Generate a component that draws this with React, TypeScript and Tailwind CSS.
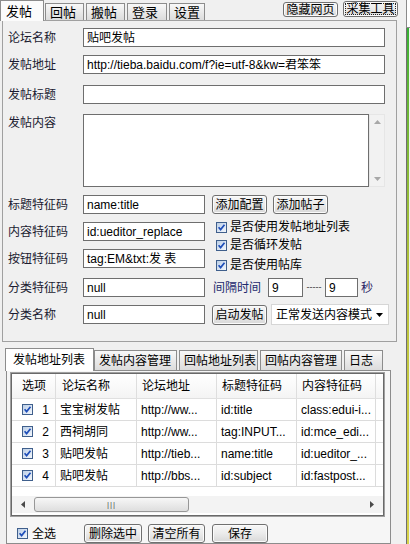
import React from 'react';
import clsx from 'clsx';

type P = { children?: React.ReactNode; className?: string };

const CheckBox: React.FC<{ className?: string }> = ({ className }) => (
    <svg width="11" height="11" viewBox="0 0 11 11" className={clsx('shrink-0', className)}>
        <defs>
            <linearGradient id="cbFill" x1="0" y1="0" x2="1" y2="1">
                <stop offset="0" stopColor="#b9cde6" />
                <stop offset="1" stopColor="#f6f9fd" />
            </linearGradient>
        </defs>
        <rect x="0.5" y="0.5" width="10" height="10" fill="url(#cbFill)" stroke="#3f5f8c" />
        <path d="M2.6 5.3 L4.6 7.6 L8.5 2.8" fill="none" stroke="#1d4db9" strokeWidth="1.7" />
    </svg>
);

const Button: React.FC<P> = ({ children, className }) => (
    <div
        className={clsx(
            'flex items-center justify-center whitespace-nowrap rounded-[3px] border border-[#707070] bg-linear-to-b from-[#f7f7f7] via-[#ebebeb] to-[#d8d8d8] text-[12px] leading-none text-black shadow-[inset_0_0_0_1px_#fbfbfb]',
            className,
        )}
    >
        {children}
    </div>
);

const Field: React.FC<P> = ({ children, className }) => (
    <div
        className={clsx(
            'flex items-center overflow-hidden whitespace-nowrap border border-[#6e6e6e] bg-white pl-[3px] text-[12px] leading-none text-black',
            className,
        )}
    >
        {children}
    </div>
);

const Label: React.FC<P> = ({ children, className }) => (
    <span className={clsx('w-[75px] shrink-0 text-[12px] leading-[16px] text-[#1b1b30]', className)}>{children}</span>
);

const topTabs = [
    { name: '回帖', w: 'w-[39px]' },
    { name: '搬帖', w: 'w-[39px]' },
    { name: '登录', w: 'w-[40px]' },
    { name: '设置', w: 'w-[36px]' },
];

const bottomTabs = [
    { name: '发帖内容管理', w: 'w-[83px]' },
    { name: '回帖地址列表', w: 'w-[79px]' },
    { name: '回帖内容管理', w: 'w-[82px]' },
    { name: '日志', w: 'w-[39px]' },
];

const columns = [
    { name: '选项', w: 'w-[44px]', pl: 'pl-[10px]' },
    { name: '论坛名称', w: 'w-[81px]', pl: 'pl-[6px]' },
    { name: '论坛地址', w: 'w-[80px]', pl: 'pl-[5px]' },
    { name: '标题特征码', w: 'w-[80px]', pl: 'pl-[5px]' },
    { name: '内容特征码', w: 'w-[79px]', pl: 'pl-[5px]' },
];

const rows = [
    ['宝宝树发帖', 'http://ww...', 'id:title', 'class:edui-i...'],
    ['西祠胡同', 'http://ww...', 'tag:INPUT...', 'id:mce_edi...'],
    ['贴吧发帖', 'http://tieb...', 'name:title', 'id:ueditor_...'],
    ['贴吧发帖', 'http://bbs...', 'id:subject', 'id:fastpost...'],
];

const App: React.FC = () => {
    return (
        <div className="flex h-[544px] w-[410px] overflow-hidden bg-[#f0f0f0] font-['Liberation_Sans','Noto_Sans_CJK_SC',sans-serif] text-black">
            <div className="flex w-[398px] shrink-0 flex-col">
                {/* top tabs */}
                <div className="flex h-[20px] shrink-0 items-end">
                    <div className="relative z-10 -mb-px flex h-[21px] w-[44px] items-center border border-b-0 border-[#8c8c8c] bg-[#fbfbfb] pl-[5px] text-[13px] leading-none">
                        发帖
                    </div>
                    <div className="ml-px flex items-end gap-[2px]">
                        {topTabs.map((t) => (
                            <div
                                key={t.name}
                                className={clsx(
                                    'flex h-[17px] items-center border border-b-0 border-[#8c8c8c] bg-linear-to-b from-[#f8f8f8] to-[#dcdcdc] pl-[4px] text-[13px] leading-none',
                                    t.w,
                                )}
                            >
                                {t.name}
                            </div>
                        ))}
                    </div>
                    <div className="mb-[3px] ml-[78px] flex gap-[5px] self-start pt-[2px]">
                        <Button className="h-[15px] w-[55px] rounded-[2px] border-[#5a5a5a]">隐藏网页</Button>
                        <Button className="-mt-px h-[16px] w-[55px] rounded-[2px] border-[#5a5a5a] p-px">
                            <span className="flex h-full w-full items-center justify-center border border-dotted border-[#222]">
                                采集工具
                            </span>
                        </Button>
                    </div>
                </div>

                {/* main form panel */}
                <div className="ml-[2px] h-[322px] w-[395px] shrink-0 border border-[#a0a0a0] bg-[#f0f0f0] pl-[5px] pt-[7px]">
                    <div className="flex h-[19px] items-center">
                        <Label className="text-[#1a1f4a]">论坛名称</Label>
                        <Field className="h-[19px] w-[302px]">贴吧发帖</Field>
                    </div>
                    <div className="mt-[8px] flex h-[19px] items-center">
                        <Label className="text-[#1a1f4a]">发帖地址</Label>
                        <Field className="h-[19px] w-[302px]">http://tieba.baidu.com/f?ie=utf-8&amp;kw=君笨笨</Field>
                    </div>
                    <div className="mt-[11px] flex h-[19px] items-center">
                        <Label>发帖标题</Label>
                        <Field className="h-[19px] w-[302px]" />
                    </div>
                    <div className="mt-[10px] flex items-start">
                        <Label className="pt-px">发帖内容</Label>
                        <Field className="h-[73px] w-[286px]" />
                        <div className="flex h-[73px] w-[16px] flex-col items-center justify-between border border-[#e6e6e6] bg-[#f2f2f2] py-[5px]">
                            <svg width="7" height="4" viewBox="0 0 7 4">
                                <path d="M0 4 L3.5 0 L7 4 Z" fill="#a8a8a8" />
                            </svg>
                            <svg width="7" height="4" viewBox="0 0 7 4">
                                <path d="M0 0 L3.5 4 L7 0 Z" fill="#a8a8a8" />
                            </svg>
                        </div>
                    </div>

                    <div className="mt-[8px] flex">
                        <div className="flex w-[197px] flex-col">
                            <div className="flex h-[19px] items-center">
                                <Label>标题特征码</Label>
                                <Field className="h-[19px] w-[122px]">name:title</Field>
                            </div>
                            <div className="mt-[8px] flex h-[19px] items-center">
                                <Label>内容特征码</Label>
                                <Field className="h-[19px] w-[122px]">id:ueditor_replace</Field>
                            </div>
                            <div className="mt-[8px] flex h-[19px] items-center">
                                <Label>按钮特征码</Label>
                                <Field className="h-[19px] w-[122px]">tag:EM&amp;txt:发 表</Field>
                            </div>
                            <div className="mt-[10px] flex h-[19px] items-center">
                                <Label>分类特征码</Label>
                                <Field className="h-[19px] w-[122px]">null</Field>
                            </div>
                            <div className="mt-[8px] flex h-[19px] items-center">
                                <Label>分类名称</Label>
                                <Field className="h-[19px] w-[122px]">null</Field>
                            </div>
                        </div>

                        <div className="ml-[7px] flex flex-col">
                            <div className="flex h-[19px] gap-[6px]">
                                <Button className="h-[19px] w-[55px]">添加配置</Button>
                                <Button className="h-[19px] w-[55px]">添加帖子</Button>
                            </div>
                            <div className="mt-[6px] flex h-[14px] items-center gap-[3px] pl-[4px] text-[12px] leading-none">
                                <CheckBox />
                                <span>是否使用发帖地址列表</span>
                            </div>
                            <div className="mt-[4px] flex h-[14px] items-center gap-[3px] pl-[4px] text-[12px] leading-none">
                                <CheckBox />
                                <span>是否循环发帖</span>
                            </div>
                            <div className="mt-[6px] flex h-[14px] items-center gap-[3px] pl-[4px] text-[12px] leading-none">
                                <CheckBox />
                                <span>是否使用帖库</span>
                            </div>
                            <div className="mt-[6px] flex h-[19px] items-center text-[12px] leading-none">
                                <span className="w-[56px] pl-px text-[#1d2a6e]">间隔时间</span>
                                <Field className="h-[19px] w-[35px]">9</Field>
                                <span className="flex w-[22px] justify-center text-[9px] leading-none text-[#333]">-----</span>
                                <Field className="h-[19px] w-[33px]">9</Field>
                                <span className="ml-[3px] text-[#2a2366]">秒</span>
                            </div>
                            <div className="mt-[7px] flex h-[21px] items-center">
                                <Button className="h-[20px] w-[55px]">启动发帖</Button>
                                <div className="ml-[4px] flex h-[21px] w-[118px] items-center justify-between whitespace-nowrap border border-[#d6d6d6] bg-white pl-[4px] pr-[5px] text-[12px] leading-none">
                                    <span>正常发送内容模式</span>
                                    <svg width="7" height="4" viewBox="0 0 7 4" className="shrink-0">
                                        <path d="M0 0 L3.5 4 L7 0 Z" fill="#000" />
                                    </svg>
                                </div>
                            </div>
                        </div>
                    </div>
                </div>

                {/* bottom tabs */}
                <div className="ml-[5px] mt-[6px] flex h-[22px] shrink-0 items-end">
                    <div className="relative z-10 -mb-px flex h-[23px] w-[89px] items-center whitespace-nowrap border border-b-0 border-[#8c8c8c] bg-white pl-[7px] text-[12px] leading-none">
                        发帖地址列表
                    </div>
                    <div className="flex items-end gap-[2px]">
                        {bottomTabs.map((t) => (
                            <div
                                key={t.name}
                                className={clsx(
                                    'flex h-[20px] items-center whitespace-nowrap border border-b-0 border-[#8c8c8c] bg-linear-to-b from-[#f8f8f8] to-[#dcdcdc] pl-[4px] text-[12px] leading-none',
                                    t.w,
                                )}
                            >
                                {t.name}
                            </div>
                        ))}
                    </div>
                </div>

                <div className="ml-[6px] flex w-[385px] flex-1 flex-col border border-[#8c8c8c] bg-[#f6f6f6] pl-[3px] pt-px">
                    <div className="h-[145px] w-[375px] border border-[#a0a0a0]">
                        <div className="flex h-full flex-col border border-[#696969] bg-white">
                            <div className="flex h-[25px] shrink-0 border-b border-[#e0e0e0] bg-linear-to-b from-white to-[#f4f4f4] text-[12px] leading-none">
                                {columns.map((c) => (
                                    <div key={c.name} className={clsx('flex items-center border-r border-[#dedede]', c.w, c.pl)}>
                                        {c.name}
                                    </div>
                                ))}
                                <div className="flex-1" />
                            </div>
                            {rows.map((r, i) => (
                                <div key={i} className="flex h-[22px] shrink-0 border-b border-[#dcdcdc] text-[12px] leading-none">
                                    <div className="flex w-[44px] items-center border-r border-[#dcdcdc] pl-[10px] pr-[6px]">
                                        <CheckBox />
                                        <span className="ml-auto">{i + 1}</span>
                                    </div>
                                    {r.map((cell, j) => (
                                        <div
                                            key={j}
                                            className={clsx(
                                                'flex items-center overflow-hidden whitespace-nowrap border-r border-[#dcdcdc] pl-[4px]',
                                                columns[j + 1].w,
                                            )}
                                        >
                                            {cell}
                                        </div>
                                    ))}
                                    <div className="flex-1" />
                                </div>
                            ))}
                            <div className="flex-1" />
                            <div className="mb-[2px] flex h-[17px] shrink-0 items-center bg-[#f3f3f3]">
                                <div className="flex h-full w-[22px] items-center justify-center">
                                    <svg width="4" height="7" viewBox="0 0 4 7">
                                        <path d="M4 0 L0 3.5 L4 7 Z" fill="#4a4a4a" />
                                    </svg>
                                </div>
                                <div className="flex h-[15px] w-[155px] items-center justify-center rounded-[3px] border border-[#979797] bg-linear-to-b from-[#f7f7f7] to-[#dedede]">
                                    <span className="text-[8px] leading-none tracking-[1px] text-[#555]">|||</span>
                                </div>
                                <div className="flex-1" />
                                <div className="flex h-full w-[22px] items-center justify-center">
                                    <svg width="4" height="7" viewBox="0 0 4 7">
                                        <path d="M0 0 L4 3.5 L0 7 Z" fill="#4a4a4a" />
                                    </svg>
                                </div>
                            </div>
                        </div>
                    </div>

                    <div className="mt-[7px] flex h-[19px] items-center">
                        <div className="flex w-[74px] items-center gap-[4px] pl-[7px] text-[12px] leading-none">
                            <CheckBox />
                            <span>全选</span>
                        </div>
                        <Button className="h-[19px] w-[58px]">删除选中</Button>
                        <Button className="ml-[6px] h-[19px] w-[57px]">清空所有</Button>
                        <Button className="ml-[7px] h-[19px] w-[56px]">保存</Button>
                    </div>
                </div>
            </div>

            {/* edge of the neighbouring window */}
            <div className="flex w-[12px] shrink-0 flex-col">
                <div className="flex h-[28px] shrink-0">
                    <div className="w-[8px] bg-[#f0f0f0]" />
                    <div className="flex-1 border-b border-l border-[#8a8a8a] bg-white" />
                </div>
                <div className="flex flex-1">
                    <div className="w-[8px] bg-[#f0f0f0]" />
                    <div className="w-px bg-[#6f6f6f]" />
                    <div className="w-[2px] bg-linear-to-b from-[#35b035] via-[#b8c23c] to-[#d8d24a]" />
                    <div className="flex-1 bg-[#f0f0f0]" />
                </div>
            </div>
        </div>
    );
};

export default App;
